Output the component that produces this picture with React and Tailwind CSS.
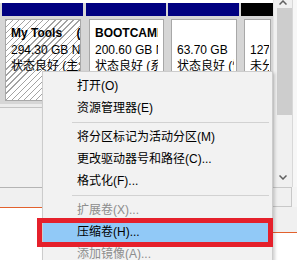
import React from 'react';

const partitions = [
  { name: 'My Tools\u2002\u2002\u2009(E:)', size: '294.30 GB NTFS', status: '状态良好 (主分区)', width: 'w-[81px]', gap: '', bar: 'bg-[#000080]', clip: 'mr-0', hatched: true },
  { name: 'BOOTCAMP (C:)', size: '200.60 GB NTFS', status: '状态良好 (系统, 启动)', width: 'w-[80px]', gap: 'ml-[3px]', bar: 'bg-[#000080]', clip: 'mr-[5px]' },
  { name: '', size: '63.70 GB', status: '状态良好 (恢复分区)', width: 'w-[71px]', gap: 'ml-[2px]', bar: 'bg-[#000080]', clip: 'mr-[2px]' },
  { name: '', size: '127 MB', status: '未分配', width: 'w-[32px]', gap: 'ml-[2px]', bar: 'bg-black', clip: 'mr-[1px]' },
];

const menuItems = [
  { label: '打开(O)' },
  { label: '资源管理器(E)' },
  { sep: true },
  { label: '将分区标记为活动分区(M)' },
  { label: '更改驱动器号和路径(C)...' },
  { label: '格式化(F)...' },
  { sep: true },
  { label: '扩展卷(X)...', disabled: true },
  { label: '压缩卷(H)...', active: true },
  { label: '添加镜像(A)...', disabled: true },
  { label: '删除卷(D)...' },
];

const Partition = ({ p }) => (
  <div className={`flex flex-col ${p.width} ${p.gap}`}>
    <div className={`h-[13px] ${p.bar}`} />
    <div className="flex-1 flex pt-[3px] pl-[3px] pr-[2px] pb-[3px]">
      <div
        className={`flex-1 min-w-0 border border-[#a8a8a8] ${
          p.hatched
            ? 'bg-[repeating-linear-gradient(135deg,#a3a3a3_0_1px,#ffffff_1px_4.3px)]'
            : 'bg-white'
        }`}
      >
        <div className={`pl-[5px] pt-[5px] ${p.clip} overflow-hidden whitespace-nowrap text-[12px] leading-[16.5px] text-black`}>
          <div className="font-bold">{p.name || '\u00a0'}</div>
          <div>{p.size}</div>
          <div>{p.status}</div>
        </div>
      </div>
    </div>
  </div>
);

export default function App() {
  return (
    <div className="relative w-[297px] h-[260px] overflow-hidden flex bg-white font-['Liberation_Sans','Noto_Sans_CJK_SC',sans-serif]">
      {/* disk area */}
      <div className="w-[273px] flex flex-col">
        <div className="h-[3px] bg-white" />
        <div className="h-[101px] flex bg-[#d6d6d6] pl-[2px]">
          {partitions.map((p, i) => (
            <Partition key={i} p={p} />
          ))}
        </div>
        <div className="h-[3px] bg-[#ececec]" />
        <div className="h-[80px] bg-[#f0f0f0] border-t border-[#c4c4c4]" />
        <div className="h-[20px] bg-[#f0f0f0] border-t border-[#b4b4b4]" />
        <div className="h-px bg-[#e2612d]" />
        <div className="flex-1 bg-white" />
      </div>

      {/* vertical scrollbar + right edge */}
      <div className="w-[24px] flex flex-col">
        <div className="h-[187px] flex">
          <div className="w-[20px] flex flex-col bg-[#f0f0f0] border-l border-[#e4e4e4] border-r border-r-[#d8d8d8]">
            <div className="h-[8px] flex justify-center items-start">
              <svg width="8" height="5" viewBox="0 0 8 5">
                <path d="M0.5 4.5 L4 1 L7.5 4.5" fill="none" stroke="#606060" strokeWidth="1.5" />
              </svg>
            </div>
            <div className="ml-[3px] w-[15px] h-[107px] bg-[#cdcdcd]" />
            <div className="flex-1" />
            <div className="h-[17px] flex justify-center items-start pt-[5px]">
              <svg width="8" height="5" viewBox="0 0 8 5">
                <path d="M0.5 0.5 L4 4 L7.5 0.5" fill="none" stroke="#606060" strokeWidth="1.5" />
              </svg>
            </div>
          </div>
          <div className="flex-1 bg-[#f7f7f7]" />
        </div>
        <div className="h-[20px] flex">
          <div className="w-[20px] -ml-px bg-[#f0f0f0] border border-[#c8c8c8]" />
          <div className="flex-1 bg-[#f4f4f4]" />
        </div>
        <div className="h-[25px] bg-[#f0f0f0]" />
        <div className="h-px bg-[#e2612d]" />
        <div className="flex-1 bg-white" />
      </div>

      {/* context menu */}
      <div className="absolute left-[42px] top-[71px] w-[231px] bg-[#f2f2f2] border border-[#cccccc] py-[3px] shadow-[2px_2px_3px_rgba(0,0,0,0.18)] text-[12px]">
        {menuItems.map((item, i) =>
          item.sep ? (
            <div key={i} className="h-[7px] flex items-center ml-[29px] mr-[3px]">
              <div className="h-px w-full bg-[#d2d2d2]" />
            </div>
          ) : (
            <div
              key={i}
              className={`h-[22px] flex items-center pl-[34px] whitespace-nowrap ${
                item.active ? 'bg-[#91c9f7]' : ''
              } ${item.disabled ? 'text-[#8d8d8d]' : 'text-black'}`}
            >
              {item.label}
            </div>
          )
        )}
      </div>

      {/* red annotation frame */}
      <div className="absolute left-[37px] top-[218px] w-[236px] h-[29px] border-[5px] border-[#e5202b]" />
    </div>
  );
}
